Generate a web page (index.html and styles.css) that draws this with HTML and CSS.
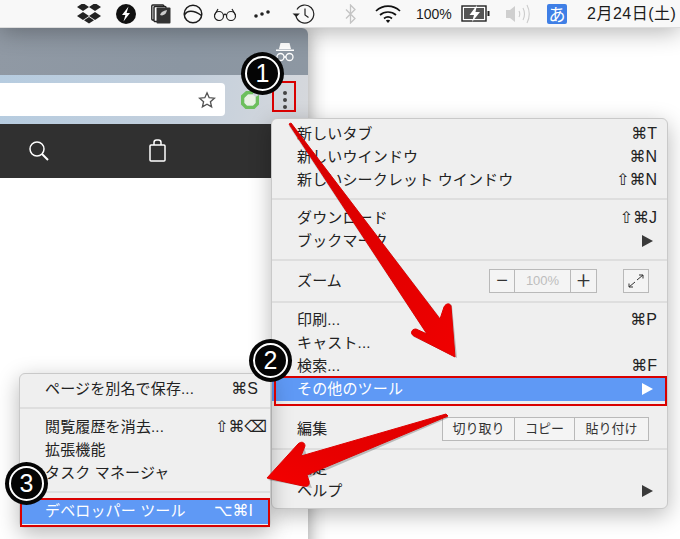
FILE: index.html
```html
<!DOCTYPE html>
<html lang="ja">
<head>
<meta charset="utf-8">
<title>Chrome デベロッパーツール</title>
<link rel="stylesheet" href="styles.css">
</head>
<body>
<div class="screen">
  <header class="menubar">
    <svg class="mb-icon i-dropbox" viewBox="0 0 24 20"><path d="M6 0l6 4-6 4-6-4zM18 0l6 4-6 4-6-4zM6 9l6 4-6 4-6-4zM18 9l6 4-6 4-6-4z" transform="translate(0 -1)"/><path d="M12 14l5 3.3-5 3.2-5-3.2z" transform="translate(0 -1)"/></svg>
    <svg class="mb-icon i-flash" viewBox="0 0 20 20"><circle cx="10" cy="10" r="10" fill="#111"/><path d="M12.5 2.5L6 11h3.4L7.5 17.5 14 9h-3.4z" fill="#fff"/></svg>
    <svg class="mb-icon i-stack" viewBox="0 0 20 20"><rect x="0.8" y="1" width="12" height="15" rx="1" fill="none" stroke="#222" stroke-width="1.4"/><rect x="3" y="2.5" width="12" height="15" rx="1" fill="#fff" stroke="#222" stroke-width="1.4"/><rect x="5.5" y="3.5" width="14" height="16" rx="1" fill="#333"/><path d="M9 11c1-3 3-4 7-5-.5 3-2 5-5 5.5z" fill="#ccc"/></svg>
    <svg class="mb-icon i-circle" viewBox="0 0 20 20" fill="none" stroke="#1c1c1c" stroke-width="1.5"><circle cx="10" cy="10" r="8.8"/><path d="M1.5 11C4 6.5 10 5.500 18.500 11.500"/></svg>
    <svg class="mb-icon i-glasses" viewBox="0 0 24 14" fill="none" stroke="#222" stroke-width="1.2"><circle cx="6" cy="9" r="4.500"/><circle cx="18" cy="9" r="4.500"/><path d="M10.500 8c1-1 2-1 3 0M1.500 8L5 2M22.500 8L19 2"/></svg>
    <svg class="mb-icon i-dots" viewBox="0 0 16 8" fill="#222"><circle cx="2" cy="6" r="1.800"/><circle cx="8" cy="4" r="1.800"/><circle cx="14" cy="2" r="1.800"/></svg>
    <svg class="mb-icon i-time" viewBox="0 0 24 20" fill="none" stroke="#222" stroke-width="1.200"><path d="M6 5.500A9 9 0 1 1 5 12"/><path d="M1.500 9.500l3.800 3.500 3.500-3.500" fill="#222" stroke="none"/><path d="M14 4.500V11l3.500 2.500"/></svg>
    <svg class="mb-icon i-bt" viewBox="0 0 12 20" fill="none" stroke="#c4c4c4" stroke-width="1.300"><path d="M1 5.500l9 9-4.500 4.500V1L10 5.500l-9 9"/></svg>
    <svg class="mb-icon i-wifi" viewBox="0 0 26 18" fill="none" stroke="#111" stroke-width="1.700"><path d="M1 6c7-6.500 17-6.500 24 0M5 10c4.500-4 11.500-4 16 0M9 13.500c2.500-2 5.500-2 8 0"/><path d="M13 18l-2.200-2.600c1.400-1 3-1 4.400 0z" fill="#111" stroke="none"/></svg>
    <span class="mb-pct">100%</span>
    <svg class="mb-icon i-batt" viewBox="0 0 30 17"><rect x="1" y="1" width="24" height="15" fill="#fff" stroke="#222" stroke-width="1.400"/><rect x="3" y="3" width="20" height="11" fill="#555"/><path d="M16 0L8.500 10H13l-2 7 8-10h-4.500z" fill="#fff"/><rect x="26.500" y="6" width="2" height="5" fill="#222"/></svg>
    <svg class="mb-icon i-vol" viewBox="0 0 26 20" fill="none" stroke="#ccc" stroke-width="1.100"><path d="M0 6h4l5-4v16l-5-4H0z" fill="#cfcfcf" stroke="none"/><path d="M13 7c1 2 1 4 0 6M17 4c2 4 2 8 0 12M21 1c3 6 3 12 0 18"/></svg>
    <span class="mb-ime">あ</span>
    <span class="mb-date">2月24日(土)</span>
  </header>

  <section class="browser">
    <div class="tabstrip">
      <svg class="incognito" viewBox="0 0 20 20"><path d="M5.500 1h9l1.500 6H4z" fill="#fff"/><rect x="1" y="7.500" width="18" height="1.500" fill="#fff"/><g fill="none" stroke="#fff" stroke-width="1.300"><circle cx="5.500" cy="15" r="3.500"/><circle cx="14.500" cy="15" r="3.500"/><path d="M9 15h2"/></g></svg>
    </div>
    <div class="toolbar">
      <div class="omnibox">
        <svg class="star" viewBox="0 0 20 20" fill="none" stroke="#555" stroke-width="1.500"><path d="M10 2l2.400 5.400 5.800.6-4.400 3.900 1.300 5.800L10 14.700l-5.100 3 1.300-5.800L1.800 8l5.800-.6z"/></svg>
      </div>
      <svg class="ext" viewBox="0 0 20 20"><path d="M6 1h9l-2.500 3.500H8L4.500 8v5L7 15.500h6L15.500 13V7l3.500-2v9.500L14.500 19h-9L1 14.500v-9z" fill="#6cbf5d"/><path d="M8 4.500h4.500l3 2.500v6L13 15.500H7L4.500 13V8z" fill="#e8f2e4"/></svg>
      <div class="kebab"><i></i><i></i><i></i></div>
    </div>
    <nav class="sitenav">
      <svg class="nav-search" viewBox="0 0 22 22" fill="none" stroke="#fff" stroke-width="1.500"><circle cx="9" cy="9" r="7"/><path d="M14 14l6 6" stroke-width="2"/></svg>
      <svg class="nav-bag" viewBox="0 0 20 24" fill="none" stroke="#fff" stroke-width="1.500"><rect x="2" y="6" width="15" height="16" rx="1"/><path d="M6 6V3.500C6 2 7 1 8.500 1h2C12 1 13 2 13 3.500V6"/></svg>
    </nav>
  </section>

  <div class="menu main-menu">
    <div class="row"><span>新しいタブ</span><span class="sc">⌘T</span></div>
    <div class="row"><span>新しいウインドウ</span><span class="sc">⌘N</span></div>
    <div class="row"><span>新しいシークレット ウインドウ</span><span class="sc">⇧⌘N</span></div>
    <div class="sep"></div>
    <div class="row"><span>ダウンロード</span><span class="sc">⇧⌘J</span></div>
    <div class="row"><span>ブックマーク</span><b class="tri"></b></div>
    <div class="sep"></div>
    <div class="row row-tall"><span>ズーム</span>
      <div class="zoomctl">
        <div class="seg-group"><span class="seg seg-z">−</span><span class="seg seg-pct">100%</span><span class="seg seg-z">+</span></div>
        <span class="seg full"><svg viewBox="0 0 16 14" fill="none" stroke="#333" stroke-width="1"><path d="M9 6l6-5M11 1h4v3.500M7 8l-6 5M1 9.500V13h4"/></svg></span>
      </div>
    </div>
    <div class="sep sep-short"></div>
    <div class="row"><span>印刷...</span><span class="sc">⌘P</span></div>
    <div class="row"><span>キャスト...</span></div>
    <div class="row"><span>検索...</span><span class="sc">⌘F</span></div>
    <div class="row hl"><span>その他のツール</span><b class="tri tri-w"></b></div>
    <div class="gap-hl"></div>
    <div class="row row-edit"><span>編集</span>
      <div class="seg-group"><span class="seg seg-e1">切り取り</span><span class="seg seg-e2">コピー</span><span class="seg seg-e3">貼り付け</span></div>
    </div>
    <div class="sep sep-edit"></div>
    <div class="row"><span>設定</span></div>
    <div class="row"><span>ヘルプ</span><b class="tri"></b></div>
  </div>

  <div class="menu sub-menu">
    <div class="row"><span>ページを別名で保存...</span><span class="sc">⌘S</span></div>
    <div class="sep"></div>
    <div class="row"><span>閲覧履歴を消去...</span><span class="sc sc-del">⇧⌘⌫</span></div>
    <div class="row"><span>拡張機能</span></div>
    <div class="row"><span>タスク マネージャ</span></div>
    <div class="sep sep-dev"></div>
    <div class="row hl row-dev"><span>デベロッパー ツール</span><span class="sc sc-dev">⌥⌘I</span></div>
  </div>

  <div class="redbox rb-kebab"></div>
  <div class="redbox rb-tools"></div>
  <div class="redbox rb-dev"></div>

  <svg class="arrows" viewBox="0 0 680 539">
    <defs>
      <linearGradient id="g1" x1="0" y1="0" x2="1" y2="1"><stop offset="0" stop-color="#d40000"/><stop offset="0.7" stop-color="#e60000"/><stop offset="1" stop-color="#f00000"/></linearGradient>
      <linearGradient id="g2" x1="1" y1="0" x2="0" y2="1"><stop offset="0" stop-color="#e00000"/><stop offset="0.6" stop-color="#e80000"/><stop offset="1" stop-color="#f40000"/></linearGradient>
    </defs>
    <path class="arrow-shadow" d="M289 126L292 124L441 319L446 306C447 303 451 303 452 306L457 358L414 337C410 334 411 329 416 329L427 335Z"/>
    <path d="M289 124L291 123L440 319L444 307C446 303 450 303 451 306L455 357L414 336C410 334 411 329 416 329L427 334Z" fill="url(#g1)" stroke="#e00000" stroke-width="1" stroke-linejoin="round"/>
    <path class="arrow-shadow" d="M447 416L448 418L308 478L312 488L268 480L303 444L308 459Z"/>
    <path d="M446 414L448 416L307 475L309 481C310 486 307 487 303 486L267 478L298 444C301 441 305 442 305 446L301 456Z" fill="url(#g2)" stroke="#e00000" stroke-width="1" stroke-linejoin="round"/>
  </svg>

  <div class="badge b1"><span>1</span></div>
  <div class="badge b2"><span>2</span></div>
  <div class="badge b3"><span>3</span></div>
</div>
</body>
</html>
```
FILE: styles.css
```css
* { box-sizing: border-box; }
html, body { margin: 0; padding: 0; }
body { background: #fff; font-family: "Liberation Sans", "Noto Sans CJK JP", sans-serif; }
.screen {
  position: relative; width: 680px; height: 539px; overflow: hidden;
  background: #fff;
}

/* macOS menu bar */
.menubar {
  position: relative; z-index: 2; height: 28px; background: #f8f8f8;
  border-bottom: 1px solid #dddddd; color: #1c1c1c; display: flex; align-items: center;
  box-shadow: 0 3px 24px rgba(0,0,0,.32);
}
.mb-icon { flex: none; display: block; }
.i-dropbox { width: 24px; height: 20px; margin-left: 77px; fill: #222; }
.i-flash { width: 20px; height: 20px; margin-left: 15px; }
.i-stack { width: 20px; height: 20px; margin-left: 15px; }
.i-circle { width: 20px; height: 20px; margin-left: 12px; }
.i-glasses { width: 24px; height: 14px; margin-left: 10px; }
.i-dots { width: 16px; height: 8px; margin-left: 17px; }
.i-time { width: 24px; height: 20px; margin-left: 21px; }
.i-bt { width: 12px; height: 20px; margin-left: 30px; }
.i-wifi { width: 26px; height: 18px; margin-left: 18px; }
.mb-pct { margin-left: 15px; font-size: 14px; width: 38px; flex: none; }
.i-batt { width: 30px; height: 17px; margin-left: 7px; }
.i-vol { width: 26px; height: 20px; margin-left: 15px; }
.mb-ime {
  flex: none; margin-left: 15px; width: 20px; height: 20px; background: #3f7fe6; color: #fff;
  border-radius: 2px; font: 17px/20px "Noto Sans CJK JP", sans-serif; text-align: center;
}
.mb-date { flex: none; margin-left: 20px; font: 16px/20px "Liberation Sans", "Noto Sans CJK JP", sans-serif; letter-spacing: .5px; white-space: nowrap; }

/* Browser window (free-placed window on the desktop) */
.browser {
  position: absolute; left: 0; top: 28px; width: 308px; height: 540px;
  background: #fff; border-radius: 0 6px 0 0; box-shadow: 0 2px 20px rgba(0,0,0,.42);
  overflow: hidden;
}
.tabstrip {
  height: 47px; background: linear-gradient(100deg, #9099a4, #8b96a2 60%, #8d97a2);
  display: flex; justify-content: flex-end; padding: 14px 13px 0 0;
}
.incognito { width: 20px; height: 20px; }
.toolbar {
  height: 49px; padding: 8px 0 0; display: flex; align-items: flex-start;
  background: linear-gradient(100deg, #b6cce0, #c3cfdc 60%, #d6d8dc);
}
.omnibox {
  width: 225px; height: 33px; background: #fff; border-radius: 0 4px 4px 0;
  display: flex; align-items: center; justify-content: flex-end; padding-right: 9px;
}
.star { width: 18px; height: 18px; }
.ext { width: 20px; height: 20px; margin: 7px 0 0 15px; flex: none; }
.kebab { margin: 6px 0 0 22px; width: 6px; display: flex; flex-direction: column; align-items: center; gap: 3px; padding-top: 2px; }
.kebab i { width: 4px; height: 4px; border-radius: 50%; background: #444; }
.sitenav { height: 54px; background: #303030; display: flex; align-items: center; }
.nav-search { width: 22px; height: 22px; margin-left: 28px; }
.nav-bag { width: 20px; height: 24px; margin-left: 98px; }

/* Menus */
.menu {
  position: absolute; z-index: 3; background: #efefef; border-radius: 6px;
  border: 1px solid #c9c9c9; color: #222;
  box-shadow: 0 6px 22px rgba(0,0,0,.28);
}
.main-menu { left: 271px; top: 118px; width: 397px; height: 391px; padding: 4px 0; }
.sub-menu { left: 19px; top: 373px; width: 252px; height: 155px; padding: 4px 0; }
.row {
  height: 23px; padding: 0 14px 1px 25px; display: flex; justify-content: space-between; align-items: center;
  font: 15px/22px "Liberation Sans", "Noto Sans CJK JP", sans-serif; letter-spacing: .15px; white-space: nowrap;
}
.sc { font: 16px/22px "Liberation Sans", "DejaVu Sans", sans-serif; letter-spacing: 0; color: #222; }
.main-menu .sc { margin-right: -4px; }
.sub-menu .row { padding-right: 12px; }
.sc-del { margin-right: -9px; }
.sc-dev { color: #fff; margin-right: 5px; }
.tri { width: 0; height: 0; border-left: 11px solid #3a3a3a; border-top: 6px solid transparent; border-bottom: 6px solid transparent; }
.tri-w { border-left-color: #fff; }
.sep { height: 15px; position: relative; }
.sep::after { content: ""; position: absolute; left: 0; right: 0; top: 6px; height: 2px; background: #dedede; }
.sep-short { height: 14px; }
.sep-dev { height: 14px; }
.sep-edit { height: 13px; }
.sep-edit::after { top: 4px; }
.row-tall { height: 27px; }
.hl { background: #5f99f5; color: #fff; }
.sub-menu .row-dev { height: 25px; }
.gap-hl { height: 14px; }
.row-edit { height: 29px; padding-right: 18px; }
.zoomctl { display: flex; align-items: center; gap: 26px; margin-right: 4px; }
.seg-group { display: flex; }
.seg {
  height: 24px; display: flex; align-items: center; justify-content: center; background: #f4f4f4;
  border: 1px solid #b9b9b9; border-left-width: 0; color: #333; font-size: 13px; line-height: 22px; letter-spacing: 0;
}
.seg:first-child { border-left-width: 1px; }
.seg-z { width: 26px; font: 300 24px/22px Roboto, sans-serif; }
.seg-pct { width: 56px; color: #bdbdbd; font-size: 13px; }
.full { width: 26px; border-left-width: 1px; }
.full svg { width: 16px; height: 14px; }
.seg-e1 { width: 73px; }
.seg-e2 { width: 60px; }
.seg-e3 { width: 74px; }

/* Annotations over the screenshot */
.redbox { position: absolute; z-index: 4; border: 2px solid #d90000; }
.rb-kebab { left: 272px; top: 81px; width: 24px; height: 31px; }
.rb-tools { left: 274px; top: 376px; width: 393px; height: 30px; }
.rb-dev { left: 20px; top: 498px; width: 250px; height: 29px; }
.arrows { position: absolute; z-index: 5; left: 0; top: 0; width: 680px; height: 539px; }
.arrow-shadow { fill: rgba(0,0,0,.22); }
.badge {
  position: absolute; z-index: 6; width: 43px; height: 43px; border-radius: 50%; background: #050505;
  display: flex; align-items: center; justify-content: center;
}
.badge span {
  width: 35px; height: 35px; border-radius: 50%; border: 2px solid #fff; color: #fff;
  font: 400 25px/31px "Liberation Sans", sans-serif; text-align: center;
}
.b1 { left: 241px; top: 52px; }
.b2 { left: 249px; top: 339px; }
.b3 { left: 5px; top: 462px; }
```
